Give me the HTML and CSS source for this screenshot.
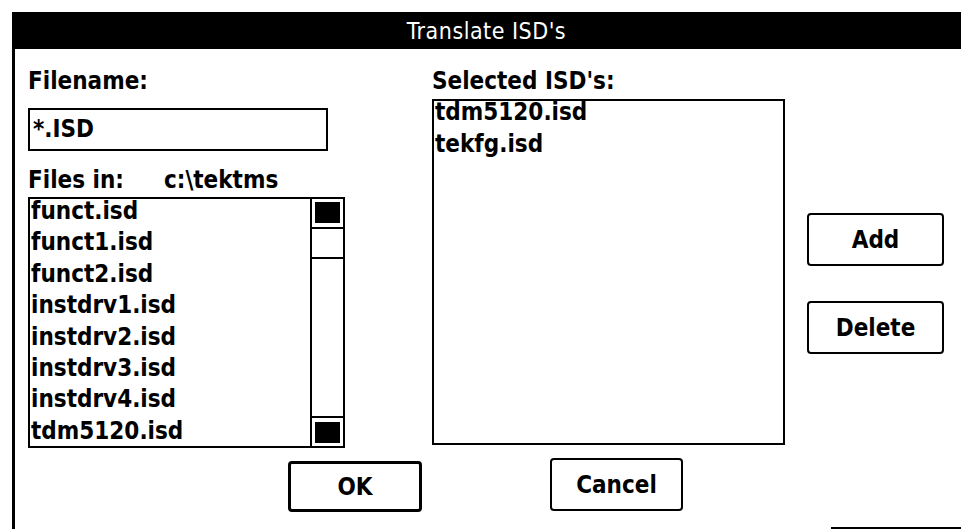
FILE: index.html
```html
<!doctype html>
<html>
<head>
<meta charset="utf-8">
<title>Translate ISD's</title>
<link rel="stylesheet" href="styles.css">
</head>

<body>
<div class="dialog">
	<div class="titlebar">Translate ISD's</div>

	<div class="main">
		<div class="col-left">
			<div class="label">Filename:</div>
			<div class="input">*.ISD</div>
			<div class="files-in"><span>Files in:</span><span class="dir">c:\tektms</span></div>
			<div class="listbox">
				<ul class="items">
					<li>funct.isd</li>
					<li>funct1.isd</li>
					<li>funct2.isd</li>
					<li>instdrv1.isd</li>
					<li>instdrv2.isd</li>
					<li>instdrv3.isd</li>
					<li>instdrv4.isd</li>
					<li>tdm5120.isd</li>
				</ul>
				<div class="scroll">
					<div class="arrow"><span></span></div>
					<div class="thumb"></div>
					<div class="track"></div>
					<div class="arrow down"><span></span></div>
				</div>
			</div>
		</div>

		<div class="col-mid">
			<div class="label sel-label">Selected ISD's:</div>
			<div class="sel-box">
				<ul class="items">
					<li>tdm5120.isd</li>
					<li>tekfg.isd</li>
				</ul>
			</div>
		</div>

		<div class="col-right">
			<div class="btn btn-add">Add</div>
			<div class="btn btn-del">Delete</div>
		</div>
	</div>

	<div class="bottom">
		<div class="btn btn-ok">OK</div>
		<div class="btn btn-cancel">Cancel</div>
	</div>
	<div class="foot"><div class="foot-line"></div></div>
</div>
</body>
</html>
```

FILE: styles.css
```css
*{ margin:0; padding:0; list-style:none; box-sizing:border-box;}
html,body{ background:#fff; height:100%;}
body{ padding:12px 0 0 12px; font-family:"DejaVu Sans Condensed", "DejaVu Sans", sans-serif; font-stretch:condensed; font-weight:bold; font-size:24px; color:#000; overflow:hidden;}

.dialog{ border-left:3px solid #000; height:517px; display:flex; flex-direction:column;}
.titlebar{ background:#000; color:#fff; height:37px; margin-left:-3px; display:flex; align-items:center; justify-content:center; font-weight:normal; font-size:23px; letter-spacing:0.5px;}

.main{ display:flex; padding-left:13px; height:400px;}
.label{ line-height:26px; margin-top:19px;}

.col-left{ width:317px;}
.input{ width:300px; height:43px; margin-top:14px; border:2px solid #000; padding:0 3px; line-height:39px;}
.files-in{ margin-top:16px; line-height:26px; display:flex;}
.files-in .dir{ margin-left:40px;}

.listbox{ margin-top:4px; height:251px; border:2px solid #000; display:flex;}
.items{ flex:1; line-height:31.4px; padding-left:1px; margin-top:-3px;}

.scroll{ width:33px; border-left:2px solid #000; display:flex; flex-direction:column;}
.arrow{ height:30px; padding:3px 3px 4px 3px; border-bottom:2px solid #000;}
.arrow span{ display:block; height:100%; background:#000;}
.arrow.down{ border-bottom:0; border-top:2px solid #000; padding:4px 3px 3px 3px;}
.thumb{ height:30px; border-bottom:2px solid #000;}
.track{ flex:1;}

.col-mid{ width:353px; margin-left:87px;}
.sel-label{ line-height:22px; margin-top:21px;}
.sel-box{ margin-top:7px; height:346px; border:2px solid #000;}
.sel-box .items{ line-height:32px; margin-top:-5px;}

.col-right{ width:137px; margin-left:22px; padding-top:164px;}
.btn{ border:2px solid #000; border-radius:4px; height:53px; display:flex; align-items:center; justify-content:center;}
.btn-del{ margin-top:35px;}

.bottom{ display:flex; align-items:flex-start; padding-left:273px;}
.btn-ok{ width:134px; height:51px; margin-top:12px; border-width:3px;}
.btn-cancel{ width:133px; margin-top:9px; margin-left:128px;}

.foot{ flex:1; display:flex; justify-content:flex-end; align-items:flex-end;}
.foot-line{ width:130px; border-top:2px solid #000;}
```
